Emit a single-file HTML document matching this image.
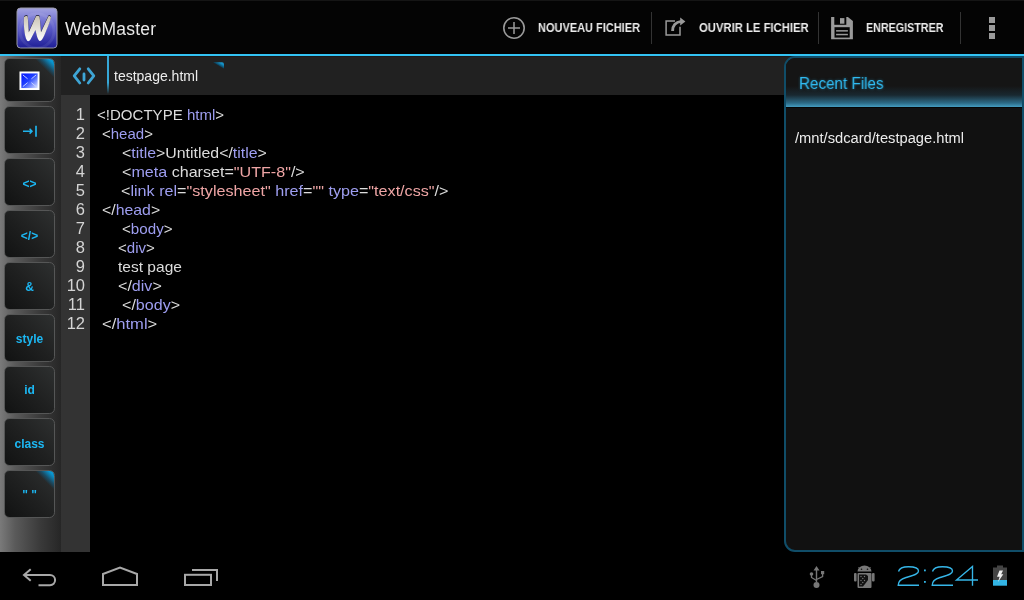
<!DOCTYPE html>
<html><head><meta charset="utf-8">
<style>
*{margin:0;padding:0;box-sizing:border-box}
html,body{width:1024px;height:600px;overflow:hidden;background:#000;font-family:"Liberation Sans",sans-serif}
.abs{position:absolute}
.act,.cl,.ln,.bt,.tx{will-change:transform}
#top{left:0;top:0;width:1024px;height:54px;background:#040404;border-top:1px solid #151515}
#bline{left:0;top:54px;width:1024px;height:2px;background:#33c3f4}
.title{left:65px;top:19px;font-size:17.5px;letter-spacing:0.25px;will-change:transform;color:#e8e8e8;white-space:nowrap}
.act{font-weight:bold;font-size:12px;color:#ececec;white-space:nowrap;top:21px;transform-origin:0 0}
.div{width:1px;top:12px;height:32px;background:#333}
#side{left:0;top:56px;width:61px;height:496px;background:linear-gradient(to right,#7a7a7a 0,#5a5a5a 15px,#3a3a3a 40px,#2c2c2c 55px,#262626 61px)}
.btn{left:4px;width:51px;height:47.5px;border-radius:5.5px;border:1.6px solid #555656;background:linear-gradient(45deg,#111212 0%,#1f2020 50%,#2e3030 100%);overflow:hidden}
.btn .bt{position:absolute;left:0;right:0;text-align:center;color:#1cb8f4;font-weight:bold;font-size:12px}
.corner{position:absolute;right:0;top:0;width:19px;height:19px;background:linear-gradient(225deg,#0cb0ee 0%,#0a90c8 15%,rgba(10,110,160,.5) 35%,rgba(20,60,80,0.1) 49%,rgba(0,0,0,0) 50%)}
#tabbar{left:61px;top:56px;width:963px;height:39px;background:#212121;border-top:1px solid #1a1a1a}
#gutter{left:61px;top:95px;width:29px;height:457px;background:#333}
#code{left:90px;top:95px;width:695px;height:457px;background:#000}
.ln{position:absolute;left:61px;width:29px;text-align:right;padding-right:5px;line-height:19px;color:#d4d4d4;font-size:16.5px}
.cl{position:absolute;transform-origin:0 0;font-size:15px;line-height:19px;color:#dcdcdc;white-space:pre}
.t{color:#9e9ef0}
.v{color:#eea5a5}
#panel{left:784px;top:56px;width:240px;height:496px;background:#111;border:2px solid #104d68;border-radius:11px 0 0 11px;overflow:hidden}
#phead{position:absolute;left:0;top:0;width:100%;height:50px;background:linear-gradient(to bottom,#151515 0,#151515 28px,#192830 37px,#2c6a86 45px,#4aaad0 50px);border-bottom:1px solid #050505}
#nav{left:0;top:552px;width:1024px;height:48px;background:#000}
</style></head><body>
<div id="top" class="abs"></div>
<!-- logo -->
<svg class="abs" style="left:16px;top:7px" width="42" height="42" viewBox="0 0 42 42">
<defs>
<linearGradient id="lg" x1="0" y1="0" x2="0" y2="1"><stop offset="0" stop-color="#a4a4e2"/><stop offset="0.5" stop-color="#5a5ac8"/><stop offset="1" stop-color="#1e1e96"/></linearGradient>
<linearGradient id="wg" x1="0" y1="0" x2="0" y2="1"><stop offset="0" stop-color="#c9c2b2"/><stop offset="1" stop-color="#ffffff"/></linearGradient>
</defs>
<rect x="1" y="1" width="40" height="40" rx="3.5" fill="url(#lg)" stroke="#9a9aa8" stroke-width="1"/>
<circle cx="21" cy="24" r="17" fill="none" stroke="rgba(255,255,255,0.08)" stroke-width="3"/><path d="M8,10 C7.5,15 8,29 11,33.5 C12,34.8 13.5,34 14.5,32.5 L19.5,23 C20.5,28 22,34 24,34 C25.5,34 27,31 28.5,28 C31,22 34,15 35,10.5 C34.5,9 33,8.8 32.3,9.5 L25,25.3 C24.5,19 24,13 23.5,9.5 C22.5,8.5 21,8.5 20,9.2 L12.8,25.3 C12.5,19 12,13 11.7,9.5 C10.5,8.8 9,9 8,10 Z" fill="#15152a" transform="translate(0,-0.8)"/><path d="M8,10 C7.5,15 8,29 11,33.5 C12,34.8 13.5,34 14.5,32.5 L19.5,23 C20.5,28 22,34 24,34 C25.5,34 27,31 28.5,28 C31,22 34,15 35,10.5 C34.5,9 33,8.8 32.3,9.5 L25,25.3 C24.5,19 24,13 23.5,9.5 C22.5,8.5 21,8.5 20,9.2 L12.8,25.3 C12.5,19 12,13 11.7,9.5 C10.5,8.8 9,9 8,10 Z" fill="url(#wg)"/></svg>
<div class="abs title">WebMaster</div>

<!-- actions -->
<svg class="abs" style="left:502px;top:16px" width="24" height="24" viewBox="0 0 24 24"><circle cx="12" cy="12" r="10.2" fill="none" stroke="#9a9a9a" stroke-width="1.6"/><path d="M12,6 V18 M6,12 H18" stroke="#9a9a9a" stroke-width="1.5"/></svg>
<div class="abs act" style="left:538px;transform:scaleX(0.916)">NOUVEAU FICHIER</div>
<div class="abs div" style="left:651px"></div>
<svg class="abs" style="left:663px;top:16px" width="26" height="24" viewBox="0 0 26 24"><path d="M12,5 H3.1 V19 H17 V10.7" fill="none" stroke="#9a9a9a" stroke-width="1.5"/><path d="M9.6,15 C9.6,10 12.5,6 18.2,5.4" fill="none" stroke="#9a9a9a" stroke-width="2.9"/><path d="M17.2,1.5 L22.4,5.6 L17.2,9.4 Z" fill="#9a9a9a"/></svg>
<div class="abs act" style="left:699px;transform:scaleX(0.94)">OUVRIR LE FICHIER</div>
<div class="abs div" style="left:818px"></div>
<svg class="abs" style="left:830px;top:16px" width="24" height="24" viewBox="0 0 24 24"><path d="M1.1,1.1 H17.9 L22.9,5 V23.2 H1.1 Z" fill="#9a9a9a"/><rect x="4.3" y="1" width="12" height="7.8" fill="#040404"/><rect x="10" y="2.1" width="4.4" height="5.6" fill="#9a9a9a"/><rect x="4.5" y="11.2" width="15.2" height="10.4" fill="#040404"/><rect x="6.1" y="14.1" width="11.8" height="1.5" fill="#9a9a9a"/><rect x="6.1" y="17.8" width="11.8" height="1.5" fill="#9a9a9a"/></svg>
<div class="abs act" style="left:866px;transform:scaleX(0.894)">ENREGISTRER</div>
<div class="abs div" style="left:960px"></div>
<div class="abs" style="left:989px;top:17px;width:6px;height:6px;background:#9a9a9a"></div>
<div class="abs" style="left:989px;top:25px;width:6px;height:6px;background:#9a9a9a"></div>
<div class="abs" style="left:989px;top:33px;width:6px;height:6px;background:#9a9a9a"></div>

<div id="bline" class="abs"></div>

<!-- sidebar -->
<div id="side" class="abs">
</div>
<div class="abs btn" style="top:58px;height:43.8px">
  <div class="corner"></div>
  <svg style="position:absolute;left:14px;top:12px" width="21" height="19.5" viewBox="0 0 22 20" preserveAspectRatio="none"><defs><linearGradient id="ig" x1="0" y1="0" x2="1" y2="1"><stop offset="0" stop-color="#0010ff"/><stop offset="0.45" stop-color="#2040ff"/><stop offset="1" stop-color="#e0e8ff"/></linearGradient></defs><rect x="0.5" y="0.5" width="21" height="19" fill="#fff"/><rect x="2.5" y="2.5" width="17" height="15" fill="url(#ig)"/><path d="M4,4 L9,8 M18,4 L13,8 M4,16 L9,12 M18,16 L13,12" stroke="#c8d4ff" stroke-width="1"/></svg>
</div>
<div class="abs btn" style="top:106px">
  <svg style="position:absolute;left:17px;top:18px" width="16" height="14" viewBox="0 0 16 14"><path d="M1,6.2 H9.8 M7.6,3.8 L10,6.2 L7.6,8.6" fill="none" stroke="#1eb3ec" stroke-width="1.5"/><path d="M14,0.8 V11.8" stroke="#1eb3ec" stroke-width="1.7"/></svg>
</div>
<div class="abs btn" style="top:158px"><div class="bt" style="top:18px">&lt;&gt;</div></div>
<div class="abs btn" style="top:210px"><div class="bt" style="top:18px">&lt;/&gt;</div></div>
<div class="abs btn" style="top:262px"><div class="bt" style="top:17px">&amp;</div></div>
<div class="abs btn" style="top:314px"><div class="bt" style="top:16.5px">style</div></div>
<div class="abs btn" style="top:366px"><div class="bt" style="top:16px">id</div></div>
<div class="abs btn" style="top:418px"><div class="bt" style="top:17.5px">class</div></div>
<div class="abs btn" style="top:470px"><div class="corner"></div><div class="bt" style="top:16.5px">" "</div></div>

<!-- tab bar -->
<div id="tabbar" class="abs"></div>
<svg class="abs" style="left:72px;top:65px" width="24" height="22" viewBox="0 0 24 22"><g fill="none" stroke="#3ea5d5" stroke-width="2.8" stroke-linecap="round" stroke-linejoin="round"><path d="M7.8,3.8 L2.2,10.9 L7.8,18 M16.2,3.8 L21.8,10.9 L16.2,18"/><path d="M12,9 V15"/></g></svg>
<div class="abs" style="left:107px;top:56px;width:2px;height:38px;background:linear-gradient(to bottom,#36a8d8 0,#36a8d8 70%,rgba(54,168,216,0) 100%)"></div>
<div class="abs tx" style="left:114px;top:68px;font-size:14px;color:#ececec">testpage.html</div>
<svg class="abs" style="left:212px;top:61px" width="13" height="9" viewBox="0 0 13 9"><defs><linearGradient id="tcg" x1="1" y1="0" x2="0.5" y2="0.5"><stop offset="0" stop-color="#1aa0d8"/><stop offset="0.45" stop-color="#1590c4"/><stop offset="1" stop-color="#0a3a52"/></linearGradient></defs><path d="M1,1.2 H10 Q12,1.2 12,3.4 V7.8 Z" fill="url(#tcg)"/></svg>

<!-- gutter & code -->
<div id="gutter" class="abs"></div>
<div id="code" class="abs"></div>

<div class="ln" style="top:105px">1</div>
<div class="ln" style="top:124px">2</div>
<div class="ln" style="top:143px">3</div>
<div class="ln" style="top:162px">4</div>
<div class="ln" style="top:181px">5</div>
<div class="ln" style="top:200px">6</div>
<div class="ln" style="top:219px">7</div>
<div class="ln" style="top:238px">8</div>
<div class="ln" style="top:257px">9</div>
<div class="ln" style="top:276px">10</div>
<div class="ln" style="top:295px">11</div>
<div class="ln" style="top:314px">12</div>
<div class="cl" id="l1" style="left:97.3px;top:105px;transform:scaleX(1.0031)">&lt;!DOCTYPE <span class="t">html</span>&gt;</div>
<div class="cl" id="l2" style="left:101.7px;top:124px;transform:scaleX(0.9922)">&lt;<span class="t">head</span>&gt;</div>
<div class="cl" id="l3" style="left:121.9px;top:143px;transform:scaleX(1.0591)">&lt;<span class="t">title</span>&gt;Untitled&lt;/<span class="t">title</span>&gt;</div>
<div class="cl" id="l4" style="left:121.9px;top:162px;transform:scaleX(1.0729)">&lt;<span class="t">meta</span> charset=<span class="v">"UTF-8"</span>/&gt;</div>
<div class="cl" id="l5" style="left:121.1px;top:181px;transform:scaleX(1.0763)">&lt;<span class="t">link</span> <span class="t">rel</span>=<span class="v">"stylesheet"</span> <span class="t">href</span>=<span class="v">""</span> <span class="t">type</span>=<span class="v">"text/css"</span>/&gt;</div>
<div class="cl" id="l6" style="left:101.5px;top:200px;transform:scaleX(1.0564)">&lt;/<span class="t">head</span>&gt;</div>
<div class="cl" id="l7" style="left:121.8px;top:219px;transform:scaleX(1.0100)">&lt;<span class="t">body</span>&gt;</div>
<div class="cl" id="l8" style="left:117.6px;top:238px;transform:scaleX(1.0027)">&lt;<span class="t">div</span>&gt;</div>
<div class="cl" id="l9" style="left:118.1px;top:257px;transform:scaleX(1.0355)">test page</div>
<div class="cl" id="l10" style="left:117.6px;top:276px;transform:scaleX(1.0707)">&lt;/<span class="t">div</span>&gt;</div>
<div class="cl" id="l11" style="left:121.8px;top:295px;transform:scaleX(1.0704)">&lt;/<span class="t">body</span>&gt;</div>
<div class="cl" id="l12" style="left:101.5px;top:314px;transform:scaleX(1.1040)">&lt;/<span class="t">html</span>&gt;</div>

<!-- recent files panel -->
<div id="panel" class="abs">
  <div id="phead"></div>
  <div class="tx" style="position:absolute;left:13px;top:17px;font-size:16px;color:#30bbf2;text-shadow:0 0 3px rgba(51,181,229,.5);transform:scaleX(0.95);transform-origin:0 0">Recent Files</div>
  <div class="tx" style="position:absolute;left:9px;top:72px;font-size:14.7px;color:#ececec;white-space:nowrap">/mnt/sdcard/testpage.html</div>
</div>

<!-- nav bar -->
<svg class="abs" style="left:0;top:552px" width="240" height="48" viewBox="0 552 240 48">
<g fill="none" stroke="#a8a8a8" stroke-width="2">
<path d="M30.7,569.3 L24,575 L30.7,580.7"/>
<path d="M24,575 H50 A5.1,5.1 0 0 1 50,585.2 H38.5"/>
<path d="M103,585 V574 L120,567.5 L137,574 V585 Z"/>
<rect x="185" y="574.8" width="26" height="10.2"/>
<path d="M192,570 H217 V581"/>
</g>
</svg>
<!-- status -->
<svg class="abs" style="left:800px;top:552px" width="224" height="48" viewBox="800 552 224 48">
<g fill="#777">
<path d="M816.5,566 L813.5,570.5 H815.8 V582 H817.2 V570.5 H819.5 Z"/>
<circle cx="816.5" cy="585" r="3"/>
<circle cx="811.5" cy="574" r="1.8"/>
<rect x="821" y="571" width="3.2" height="3.2"/>
</g>
<g fill="none" stroke="#777" stroke-width="1.3">
<path d="M811.5,574 V577.5 L816.5,580.5"/>
<path d="M822.6,574 V576.5 L816.5,579.5"/>
</g>
<g fill="#777">
<path d="M857.5,571.5 A7,6 0 0 1 871.5,571.5 Z"/>
<rect x="854" y="573" width="2.6" height="8.5" rx="1"/>
<rect x="872" y="573" width="2.6" height="8.5" rx="1"/>
<rect x="857.5" y="573" width="14" height="15" rx="1"/>
<path d="M858.5,567 L860,569.5 M870.5,567 L869,569.5" stroke="#777" stroke-width="0.8"/>
</g>
<g fill="#111"><circle cx="861.5" cy="569.2" r="0.8"/><circle cx="867.5" cy="569.2" r="0.8"/>
<path d="M859,574.5 H866 L868,576 V580 L865,584 L863,586.5 H859 Z"/></g>
<g fill="#777"><circle cx="861" cy="576.5" r="0.7"/><circle cx="864.5" cy="576.5" r="0.7"/><circle cx="862.8" cy="578.5" r="0.7"/><circle cx="861" cy="580.5" r="0.7"/><circle cx="864.5" cy="580.5" r="0.7"/><circle cx="862.8" cy="582.5" r="0.7"/><circle cx="861" cy="584.5" r="0.7"/></g>
<!-- clock -->
<g fill="none" stroke="#36b6e8" stroke-width="1.35">
<path d="M898.5,571.5 C899.5,567.5 903.5,566.7 908.5,566.7 C914.5,566.7 918.5,568 918.5,571 C918.5,574.5 913,575.5 906,577.5 C900,579.3 898.2,581.5 898.2,585.2 H919"/>
<path d="M932.5,571.5 C933.5,567.5 937.5,566.7 942.5,566.7 C948.5,566.7 952.5,568 952.5,571 C952.5,574.5 947,575.5 940,577.5 C934,579.3 932.2,581.5 932.2,585.2 H953"/>
<path d="M972.5,585.7 V566.5 L956.5,580 H978"/>
</g>
<g fill="#33b5e5"><rect x="924" y="569.5" width="1.8" height="1.8"/><rect x="924" y="581" width="1.8" height="1.8"/></g>
<!-- battery -->
<rect x="997" y="565.5" width="6" height="2.5" fill="#444"/>
<rect x="993" y="567.5" width="14" height="12.5" fill="#444"/>
<rect x="993" y="580" width="14" height="5.7" fill="#33b5e5"/>
<path d="M999.5,570.5 H1003 L1001.2,574.2 H1003.3 L998,582 L999.6,576.8 H997 Z" fill="#f0f0f0"/>
</svg>
</body></html>
